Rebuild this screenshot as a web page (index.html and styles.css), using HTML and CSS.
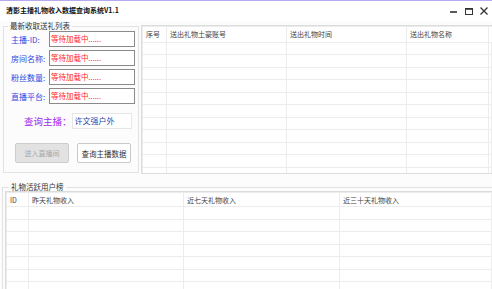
FILE: index.html
```html
<!DOCTYPE html>
<html lang="zh-CN">
<head>
    <meta charset="UTF-8">
    <title>清影主播礼物收入数据查询系统V1.1</title>
    <link rel="stylesheet" href="styles.css">
</head>
<body>
    <div class="window">
        <!-- title bar -->
        <div class="titlebar">
            <span class="title">清影主播礼物收入数据查询系统V1.1</span>
            <div class="controls">
                <svg width="10" height="10" viewBox="0 0 10 10"><path d="M1 6h7" stroke="#333" stroke-width="1.6"/></svg>
                <svg width="10" height="10" viewBox="0 0 10 10"><rect x="1.5" y="2.5" width="7" height="6" fill="none" stroke="#333" stroke-width="1"/><path d="M1.5 3h7" stroke="#333" stroke-width="1.6"/></svg>
                <svg width="10" height="10" viewBox="0 0 10 10"><path d="M1.5 1.5l7 7M8.5 1.5l-7 7" stroke="#333" stroke-width="1.3"/></svg>
            </div>
        </div>

        <div class="top">
            <!-- streamer info -->
            <fieldset class="group group-info">
                <legend>最新收取送礼列表</legend>
                <div class="info-body">
                    <div class="fields">
                        <div class="field"><span class="field-label">主播-ID:</span><span class="field-box">等待加载中......</span></div>
                        <div class="field"><span class="field-label">房间名称:</span><span class="field-box">等待加载中......</span></div>
                        <div class="field"><span class="field-label">粉丝数量:</span><span class="field-box">等待加载中......</span></div>
                        <div class="field"><span class="field-label">直播平台:</span><span class="field-box">等待加载中......</span></div>
                    </div>
                    <div class="query">
                        <span class="query-label">查询主播：</span>
                        <span class="query-box">许文强户外</span>
                    </div>
                    <div class="buttons">
                        <button class="btn" disabled>进入直播间</button>
                        <button class="btn">查询主播数据</button>
                    </div>
                </div>
            </fieldset>

            <!-- latest gifts -->
            <div class="grid grid-gifts">
                <table>
                    <colgroup><col style="width:24px"><col style="width:120px"><col style="width:120px"><col style="width:82px"><col></colgroup>
                    <thead><tr><th>序号</th><th>送出礼物土豪账号</th><th>送出礼物时间</th><th>送出礼物名称</th><th class="filler"></th></tr></thead>
                    <tbody id="giftRows"></tbody>
                </table>
            </div>
        </div>

        <!-- ranking -->
        <fieldset class="group group-rank">
            <legend>礼物活跃用户榜</legend>
            <div class="grid grid-rank">
                <table>
                    <colgroup><col style="width:22px"><col style="width:155px"><col style="width:156px"><col></colgroup>
                    <thead><tr><th>ID</th><th>昨天礼物收入</th><th>近七天礼物收入</th><th>近三十天礼物收入</th></tr></thead>
                    <tbody id="rankRows"></tbody>
                </table>
            </div>
        </fieldset>
    </div>

    <script>
        // empty rows for the grids
        function fillRows(id, rows, cols) {
            const body = document.getElementById(id);
            for (let i = 0; i < rows; i++) {
                const tr = document.createElement('tr');
                for (let j = 0; j < cols; j++) {
                    tr.appendChild(document.createElement('td'));
                }
                body.appendChild(tr);
            }
        }
        fillRows('giftRows', 11, 5);
        fillRows('rankRows', 8, 4);
    </script>
</body>
</html>
```

FILE: styles.css
```css
/* styles.css */
body {
margin: 0;
width: 492px;
height: 289px;
overflow: hidden;
background-color: #fcfcfc;
font-family: "Noto Sans CJK SC", "Liberation Sans", sans-serif;
}

.window {
border-top: 1px solid #b6aaee;
height: 288px;
overflow: hidden;
}

.titlebar {
height: 20px;
display: flex;
align-items: center;
justify-content: space-between;
padding-left: 6px;
background-color: #fff;
}

.title {
font-size: 7px;
font-weight: bold;
color: #111;
line-height: 10px;
margin-top: -2px;
}

.controls {
display: flex;
gap: 5px;
padding-right: 3px;
}

.top {
display: flex;
align-items: flex-start;
padding-left: 3px;
gap: 2px;
}

.group {
margin: 0;
border: 1px solid #e2e2e2;
padding: 0;
min-width: 0;
}

.group legend {
font-size: 7.5px;
line-height: 10px;
color: #333;
padding: 0 2px;
margin-left: 4px;
}

.group-info {
box-sizing: border-box;
width: 136px;
}

.info-body {
padding: 0 0 9px 7px;
}

.fields {
display: flex;
flex-direction: column;
gap: 3px;
}

.field {
display: flex;
align-items: center;
height: 16px;
}

.field-label {
width: 38px;
font-size: 8px;
color: #2e48e0;
white-space: nowrap;
}

.field-box {
box-sizing: border-box;
width: 86px;
height: 16px;
border: 1px solid #8a8a8a;
background-color: #fff;
color: #ff1f1f;
font-size: 7.5px;
line-height: 14px;
padding-left: 1px;
white-space: nowrap;
}

.query {
display: flex;
align-items: center;
margin: 9px 0 0 13px;
height: 16px;
}

.query-label {
font-size: 9.5px;
color: #a22cf0;
white-space: nowrap;
}

.query-box {
box-sizing: border-box;
width: 60px;
height: 16px;
border: 1px solid #e6e6e6;
background-color: #fff;
color: #2a3fa8;
font-size: 8px;
line-height: 14px;
padding-left: 2px;
}

.buttons {
display: flex;
gap: 8px;
margin: 14px 0 0 4px;
}

.btn {
box-sizing: border-box;
width: 54px;
height: 20px;
padding: 0;
border: 1px solid #c9c9c9;
border-radius: 2px;
background-color: #fff;
color: #333;
font-family: inherit;
font-size: 7.5px;
}

.btn:disabled {
background-color: #e2e2e2;
border-color: #cdcdcd;
color: #a8a8a8;
font-size: 7px;
}

.grid {
overflow: hidden;
background-color: #fff;
}

.grid table {
border-collapse: collapse;
table-layout: fixed;
width: 100%;
}

.grid th,
.grid td {
border: 1px solid #ececec;
padding: 0 0 0 3px;
font-size: 7px;
font-weight: normal;
color: #444;
text-align: left;
white-space: nowrap;
overflow: hidden;
}

.grid td {
height: 11.5px;
}

.grid-gifts {
flex: 1;
margin-top: 4px;
height: 147px;
border: 1px solid #dcdcdc;
border-right: none;
}

.grid-gifts th {
height: 14.5px;
}

.grid-gifts th.filler {
border-right: none;
}

.group-rank {
margin: 9px 0 0 2px;
border-right: none;
border-bottom: none;
}

.group-rank legend {
line-height: 8px;
margin-left: 6px;
}

.grid-rank {
margin-left: 2px;
height: 120px;
border: 1px solid #dcdcdc;
border-right: none;
}

.grid-rank th {
height: 13px;
}
```
